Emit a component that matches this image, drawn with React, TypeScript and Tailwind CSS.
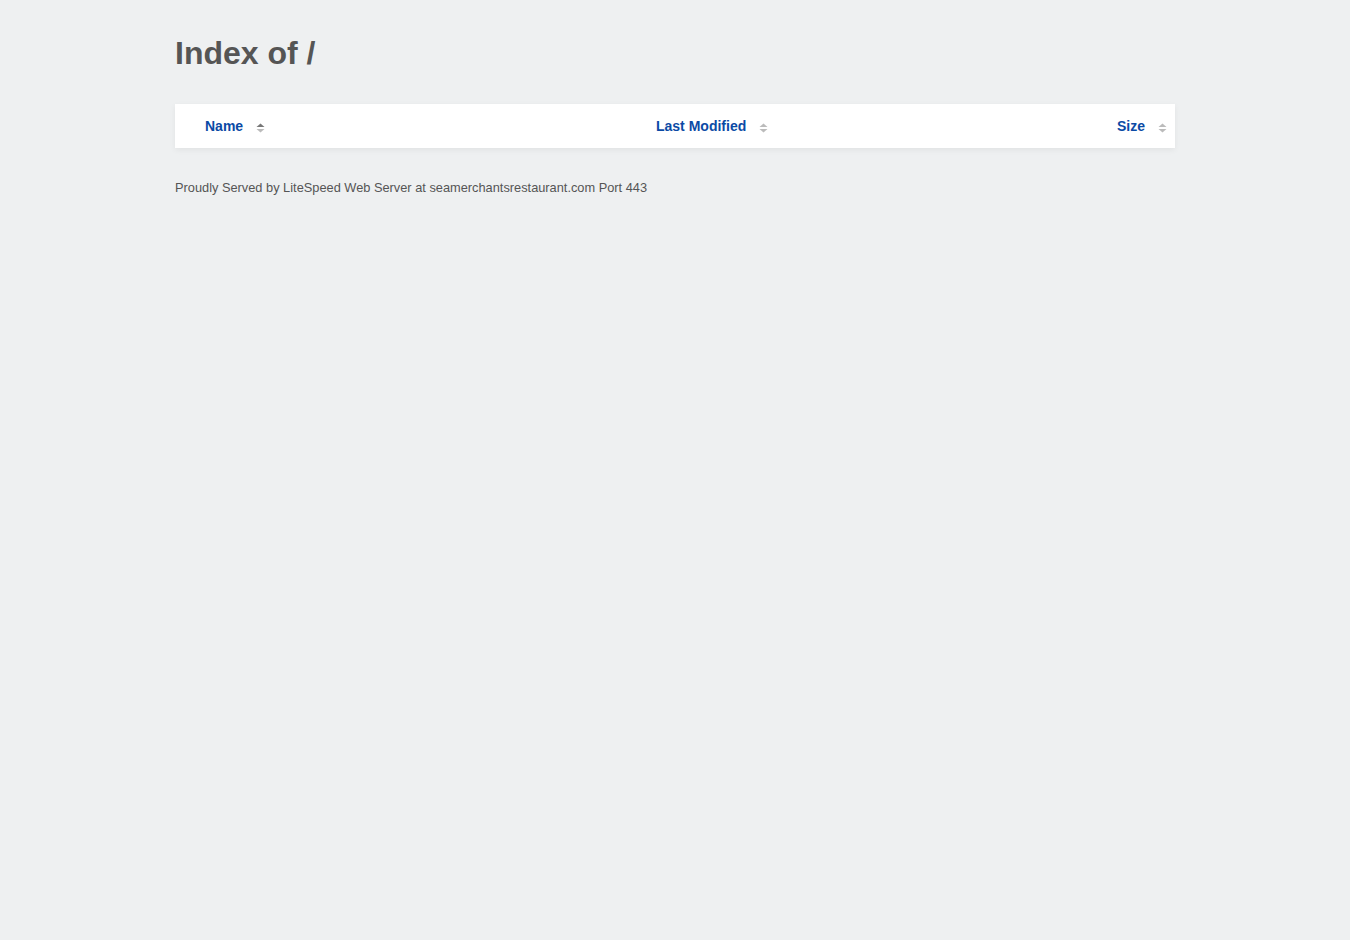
export default function App() {
  return (
    <div className="min-h-[940px] bg-[#eef0f1] text-[#555]" style={{ fontFamily: "'Liberation Sans', Arial, sans-serif" }}>
      <div className="mx-auto w-[1000px] pt-[33px]">
        <h1 className="text-[32px] font-bold leading-[40px] text-[#555]">Index of /</h1>
        <div className="mt-[31px] bg-white shadow-[0_2px_6px_rgba(0,0,0,0.06)]">
          <div className="flex h-[44px] items-center text-[14px] font-bold text-[#0b4aa5]">
            <div className="flex w-[481px] items-center pl-[30px]">
              Name
              <SortIcon active />
            </div>
            <div className="flex flex-1 items-center">
              Last Modified
              <SortIcon />
            </div>
            <div className="flex items-center pr-[8px]">
              Size
              <SortIcon />
            </div>
          </div>
        </div>
        <p className="mt-[30px] text-[12.8px] text-[#555]">
          Proudly Served by LiteSpeed Web Server at seamerchantsrestaurant.com Port 443
        </p>
      </div>
    </div>
  );
}

function SortIcon({ active = false }: { active?: boolean }) {
  return (
    <svg className="ml-[13px] mt-[3px]" width="9" height="10" viewBox="0 0 9 10">
      <path d="M4.5 0.5 L8.5 4 L0.5 4 Z" fill={active ? '#777' : '#bbb'} />
      <path d="M4.5 9.5 L8.5 6 L0.5 6 Z" fill="#bbb" />
    </svg>
  );
}
